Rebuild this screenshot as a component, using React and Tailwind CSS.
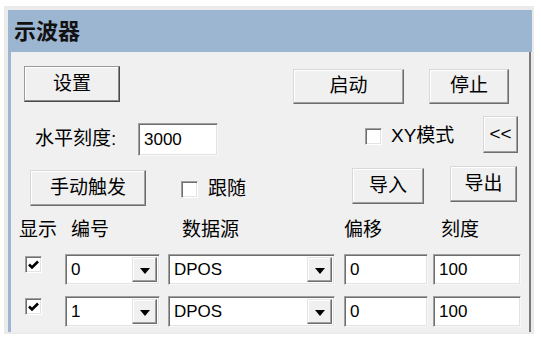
import React from 'react';

const font = { fontFamily: '"Liberation Sans", "Noto Sans CJK SC", sans-serif' };

// raised classic button
const Btn = ({ w, h, mt = 0, ml = '', def = false, children, className = '' }) => (
  <div
    className={`${w} ${h} ${ml} ${className} flex items-center justify-center bg-[#f0f0f0] text-[19px] text-black border ${
      def
        ? 'border-t-[#9a9a9a] border-l-[#9a9a9a] border-r-[#4a4a4a] border-b-[#4a4a4a] shadow-[inset_-1px_-1px_#8a8a8a,inset_1px_1px_#ffffff]'
        : 'border-t-[#d8d8d8] border-l-[#d8d8d8] border-r-[#6e6e6e] border-b-[#6e6e6e] shadow-[inset_-1px_-1px_#a0a0a0,inset_1px_1px_#ffffff]'
    }`}
    style={{ marginTop: mt }}
  >
    {children}
  </div>
);

// sunken edit box
const Edit = ({ w, h, ml = '', value }) => (
  <div
    className={`${w} ${h} ${ml} flex items-center bg-white pl-[5px] text-[17px] text-black border border-t-[#a0a0a0] border-l-[#a0a0a0] border-r-[#f7f7f7] border-b-[#f7f7f7] shadow-[inset_1px_1px_#6e6e6e,inset_-1px_-1px_#e3e3e3]`}
  >
    {value}
  </div>
);

const Arrow = () => (
  <svg width="10" height="6" viewBox="0 0 10 6" className="mt-[3px]">
    <path d="M0 0 H10 L5 6 Z" fill="#000" />
  </svg>
);

const Combo = ({ w, ml, value }) => (
  <div
    className={`${w} h-[31px] ${ml} flex items-stretch bg-white text-[17px] text-black border border-t-[#a0a0a0] border-l-[#a0a0a0] border-r-[#f7f7f7] border-b-[#f7f7f7] shadow-[inset_1px_1px_#6e6e6e,inset_-1px_-1px_#e3e3e3] p-[2px]`}
  >
    <div className="flex-1 flex items-center pl-[3px]">{value}</div>
    <div className="w-[25px] flex items-center justify-center bg-[#f0f0f0] border border-t-[#e3e3e3] border-l-[#e3e3e3] border-r-[#6e6e6e] border-b-[#6e6e6e] shadow-[inset_-1px_-1px_#a0a0a0,inset_1px_1px_#ffffff]">
      <Arrow />
    </div>
  </div>
);

const Check = ({ checked, ml = '', mt = '' }) => (
  <div
    className={`w-[17px] h-[17px] ${ml} ${mt} flex items-center justify-center bg-white border border-t-[#a0a0a0] border-l-[#a0a0a0] border-r-[#ffffff] border-b-[#ffffff] shadow-[inset_1px_1px_#6e6e6e,inset_-1px_-1px_#e3e3e3]`}
  >
    {checked && (
      <svg width="11" height="10" viewBox="0 0 11 10">
        <path d="M1 4.5 L4 7.5 L10 1.5" stroke="#000" strokeWidth="2.6" fill="none" />
      </svg>
    )}
  </div>
);

const DataRow = ({ h, num }) => (
  <div className={`${h} flex items-start`}>
    <Check checked ml="ml-[14px]" mt="mt-[2px]" />
    <Combo w="w-[95px]" ml="ml-[23px]" value={num} />
    <Combo w="w-[167px]" ml="ml-[8px]" value="DPOS" />
    <div className="ml-[9px]"><Edit w="w-[84px]" h="h-[31px]" value="0" /></div>
    <div className="ml-[5px]"><Edit w="w-[88px]" h="h-[31px]" value="100" /></div>
  </div>
);

export default function App() {
  return (
    <div className="w-[541px] h-[340px] bg-white overflow-hidden pt-[6px] pl-[4px]" style={font}>
      <div className="w-[530px] h-[328px] bg-[#ebebeb] pt-[4px] pl-[4px]">
        <div className="w-[524px] h-[322px] flex flex-col">
          {/* Title */}
          <div className="h-[43px] bg-[#9cb5d1] pl-[6px] flex items-center">
            <span className="text-[22px] font-bold text-[#111]">示波器</span>
          </div>

          <div className="flex-1 flex">
            <div className="w-[3px] bg-[#9cb5d1]" />
            <div className="w-[518px] bg-[#f0f0f0] flex flex-col pt-[14px] text-[19px] text-black">
              {/* Row A */}
              <div className="h-[50px] flex items-start">
                <Btn w="w-[96px]" h="h-[36px]" ml="ml-[13px]" def>设置</Btn>
                <Btn w="w-[111px]" h="h-[35px]" ml="ml-[173px]" mt={3}>启动</Btn>
                <Btn w="w-[80px]" h="h-[35px]" ml="ml-[25px]" mt={3}>停止</Btn>
              </div>

              {/* Row B */}
              <div className="h-[50px] flex items-start">
                <div className="w-[103px] h-[33px] ml-[24px] mt-[7px] flex items-center">水平刻度:</div>
                <div className="mt-[7px]"><Edit w="w-[80px]" h="h-[33px]" value="3000" /></div>
                <div className="ml-[147px] mt-[4px] h-[33px] flex items-center">
                  <Check />
                  <span className="ml-[9px]">XY模式</span>
                </div>
                <Btn w="w-[35px]" h="h-[37px]" className="ml-auto mr-[11px] text-[17px]">&lt;&lt;</Btn>
              </div>

              {/* Row C */}
              <div className="h-[50px] flex items-start">
                <Btn w="w-[116px]" h="h-[36px]" ml="ml-[19px]" mt={4}>手动触发</Btn>
                <div className="ml-[35px] mt-[5px] h-[36px] flex items-center">
                  <Check />
                  <span className="ml-[10px]">跟随</span>
                </div>
                <Btn w="w-[72px]" h="h-[36px]" className="ml-auto" mt={2}>导入</Btn>
                <Btn w="w-[67px]" h="h-[36px]" className="ml-[26px] mr-[12px]">导出</Btn>
              </div>

              {/* Header */}
              <div className="h-[38px] flex items-start pt-[3px] leading-[22px]">
                <span className="w-[52px] ml-[8px]">显示</span>
                <span className="w-[111px]">编号</span>
                <span className="w-[162px]">数据源</span>
                <span className="w-[97px]">偏移</span>
                <span>刻度</span>
              </div>

              <DataRow h="h-[42px]" num="0" />
              <DataRow h="h-[36px]" num="1" />
            </div>
            <div className="w-[2px] bg-[#7a7a7a]" />
            <div className="w-[1px] bg-[#ebebeb]" />
          </div>
        </div>
      </div>
    </div>
  );
}
